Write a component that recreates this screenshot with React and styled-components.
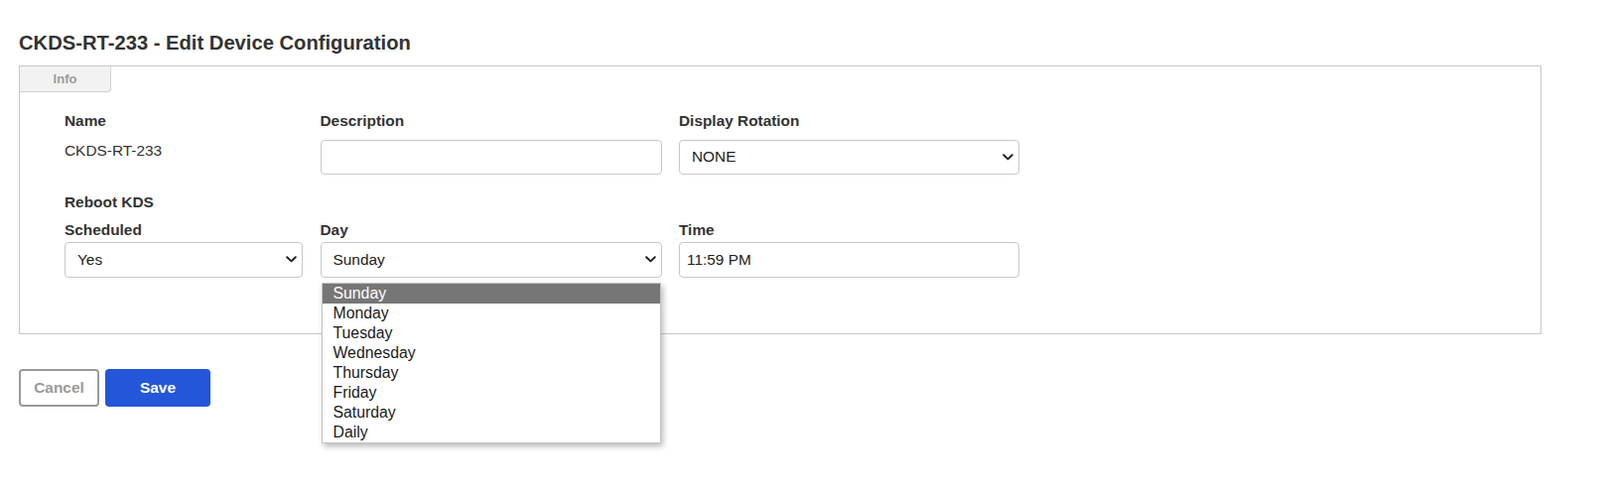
import styled, { createGlobalStyle } from "styled-components";

const GlobalStyle = createGlobalStyle`
  html, body {
    height: 100%;
  }
  body {
    margin: 0;
    background: #fff;
    font-family: "Liberation Sans", Arial, sans-serif;
    color: #333;
  }
  #root {
    min-height: 100%;
  }
`;

const days = [
  "Sunday",
  "Monday",
  "Tuesday",
  "Wednesday",
  "Thursday",
  "Friday",
  "Saturday",
  "Daily",
];

function Chevron() {
  return (
    <svg width="11" height="7" viewBox="0 0 11 7">
      <path
        d="M1.2 1.2l4.3 4.2 4.3-4.2"
        fill="none"
        stroke="#222"
        strokeWidth="2"
        strokeLinecap="round"
        strokeLinejoin="round"
      />
    </svg>
  );
}

function Select({ value }) {
  return (
    <SelectBox>
      <span>{value}</span>
      <Chevron />
    </SelectBox>
  );
}

function App() {
  return (
    <Page>
      <GlobalStyle />
      <Title>CKDS-RT-233 - Edit Device Configuration</Title>

      <Panel>
        <Tab>Info</Tab>

        <Content>
          <Grid>
            <Field>
              <Label $gap={7.5}>Name</Label>
              <Value>CKDS-RT-233</Value>
            </Field>
            <Field>
              <Label $gap={7.5}>Description</Label>
              <Input />
            </Field>
            <Field>
              <Label $gap={7.5}>Display Rotation</Label>
              <Select value="NONE" />
            </Field>
          </Grid>

          <Section>Reboot KDS</Section>

          <Grid>
            <Field>
              <Label $gap={1}>Scheduled</Label>
              <Select value="Yes" />
            </Field>
            <Field>
              <Label $gap={1}>Day</Label>
              <DropWrap>
                <Select value="Sunday" />
                <Dropdown>
                  {days.map((d, i) => (
                    <Option key={d} $active={i === 0}>
                      {d}
                    </Option>
                  ))}
                </Dropdown>
              </DropWrap>
            </Field>
            <Field>
              <Label $gap={1}>Time</Label>
              <Input defaultValue="11:59 PM" />
            </Field>
          </Grid>
        </Content>
      </Panel>

      <Actions>
        <CancelButton>Cancel</CancelButton>
        <SaveButton>Save</SaveButton>
      </Actions>
    </Page>
  );
}

export default App;

const Page = styled.div`
  padding: 32px 0 0 19px;
  width: 1553px;
  min-height: 495px;
  box-sizing: border-box;
`;

const Title = styled.h1`
  margin: 0 0 12px;
  font-size: 20.2px;
  line-height: 22px;
  font-weight: 700;
  color: #333;
`;

const Panel = styled.div`
  border: 1px solid #c8c8c8;
  background: #fff;
`;

const Tab = styled.div`
  width: 91px;
  height: 25px;
  line-height: 25px;
  text-align: center;
  font-size: 13px;
  font-weight: 700;
  color: #9a9a9a;
  background: #f2f2f2;
  border-right: 1px solid #d2d2d2;
  border-bottom: 1px solid #d2d2d2;
  border-bottom-right-radius: 4px;
`;

const Content = styled.div`
  padding: 18px 0 56px 45px;
`;

const Grid = styled.div`
  display: grid;
  grid-template-columns: 240px 344px 343px;
  column-gap: 17.5px;
`;

const Field = styled.div`
  display: flex;
  flex-direction: column;
`;

const Label = styled.label`
  font-size: 15.4px;
  line-height: 22px;
  font-weight: 700;
  color: #333;
  margin-bottom: ${(p) => p.$gap}px;
`;

const Value = styled.div`
  font-size: 15.4px;
  line-height: 22px;
  color: #333;
`;

const Section = styled.div`
  margin: 17px 0 6px;
  font-size: 15.4px;
  line-height: 22px;
  font-weight: 700;
  color: #333;
`;

const Input = styled.input`
  box-sizing: border-box;
  height: 35.5px;
  width: 100%;
  padding: 0 7px;
  border: 1px solid #c8c8c8;
  border-radius: 4px;
  font-family: inherit;
  font-size: 15.4px;
  color: #222;
  outline: none;
`;

const SelectBox = styled.div`
  box-sizing: border-box;
  height: 35.5px;
  display: flex;
  align-items: center;
  justify-content: space-between;
  padding: 0 5px 0 12px;
  border: 1px solid #c8c8c8;
  border-radius: 4px;
  font-size: 15.4px;
  color: #222;
  background: #fff;
`;

const DropWrap = styled.div`
  position: relative;
`;

const Dropdown = styled.div`
  position: absolute;
  top: calc(100% + 5px);
  left: 1px;
  width: 342px;
  box-sizing: border-box;
  background: #fff;
  border: 1px solid #c4c4c4;
  box-shadow: 2px 3px 6px rgba(0, 0, 0, 0.28);
  z-index: 5;
`;

const Option = styled.div`
  height: 20px;
  line-height: 20px;
  padding-left: 11px;
  font-size: 15.8px;
  color: ${(p) => (p.$active ? "#fff" : "#1a1a1a")};
  background: ${(p) => (p.$active ? "#767676" : "#fff")};
`;

const Actions = styled.div`
  display: flex;
  gap: 6px;
  margin-top: 35px;
`;

const BaseButton = styled.button`
  box-sizing: border-box;
  height: 38px;
  border-radius: 4px;
  font-family: inherit;
  font-size: 15.4px;
  font-weight: 700;
  cursor: pointer;
`;

const CancelButton = styled(BaseButton)`
  width: 81px;
  background: #fff;
  color: #9a9a9a;
  border: 2px solid #9a9a9a;
`;

const SaveButton = styled(BaseButton)`
  width: 106px;
  background: #2456d9;
  color: #fff;
  border: none;
`;
